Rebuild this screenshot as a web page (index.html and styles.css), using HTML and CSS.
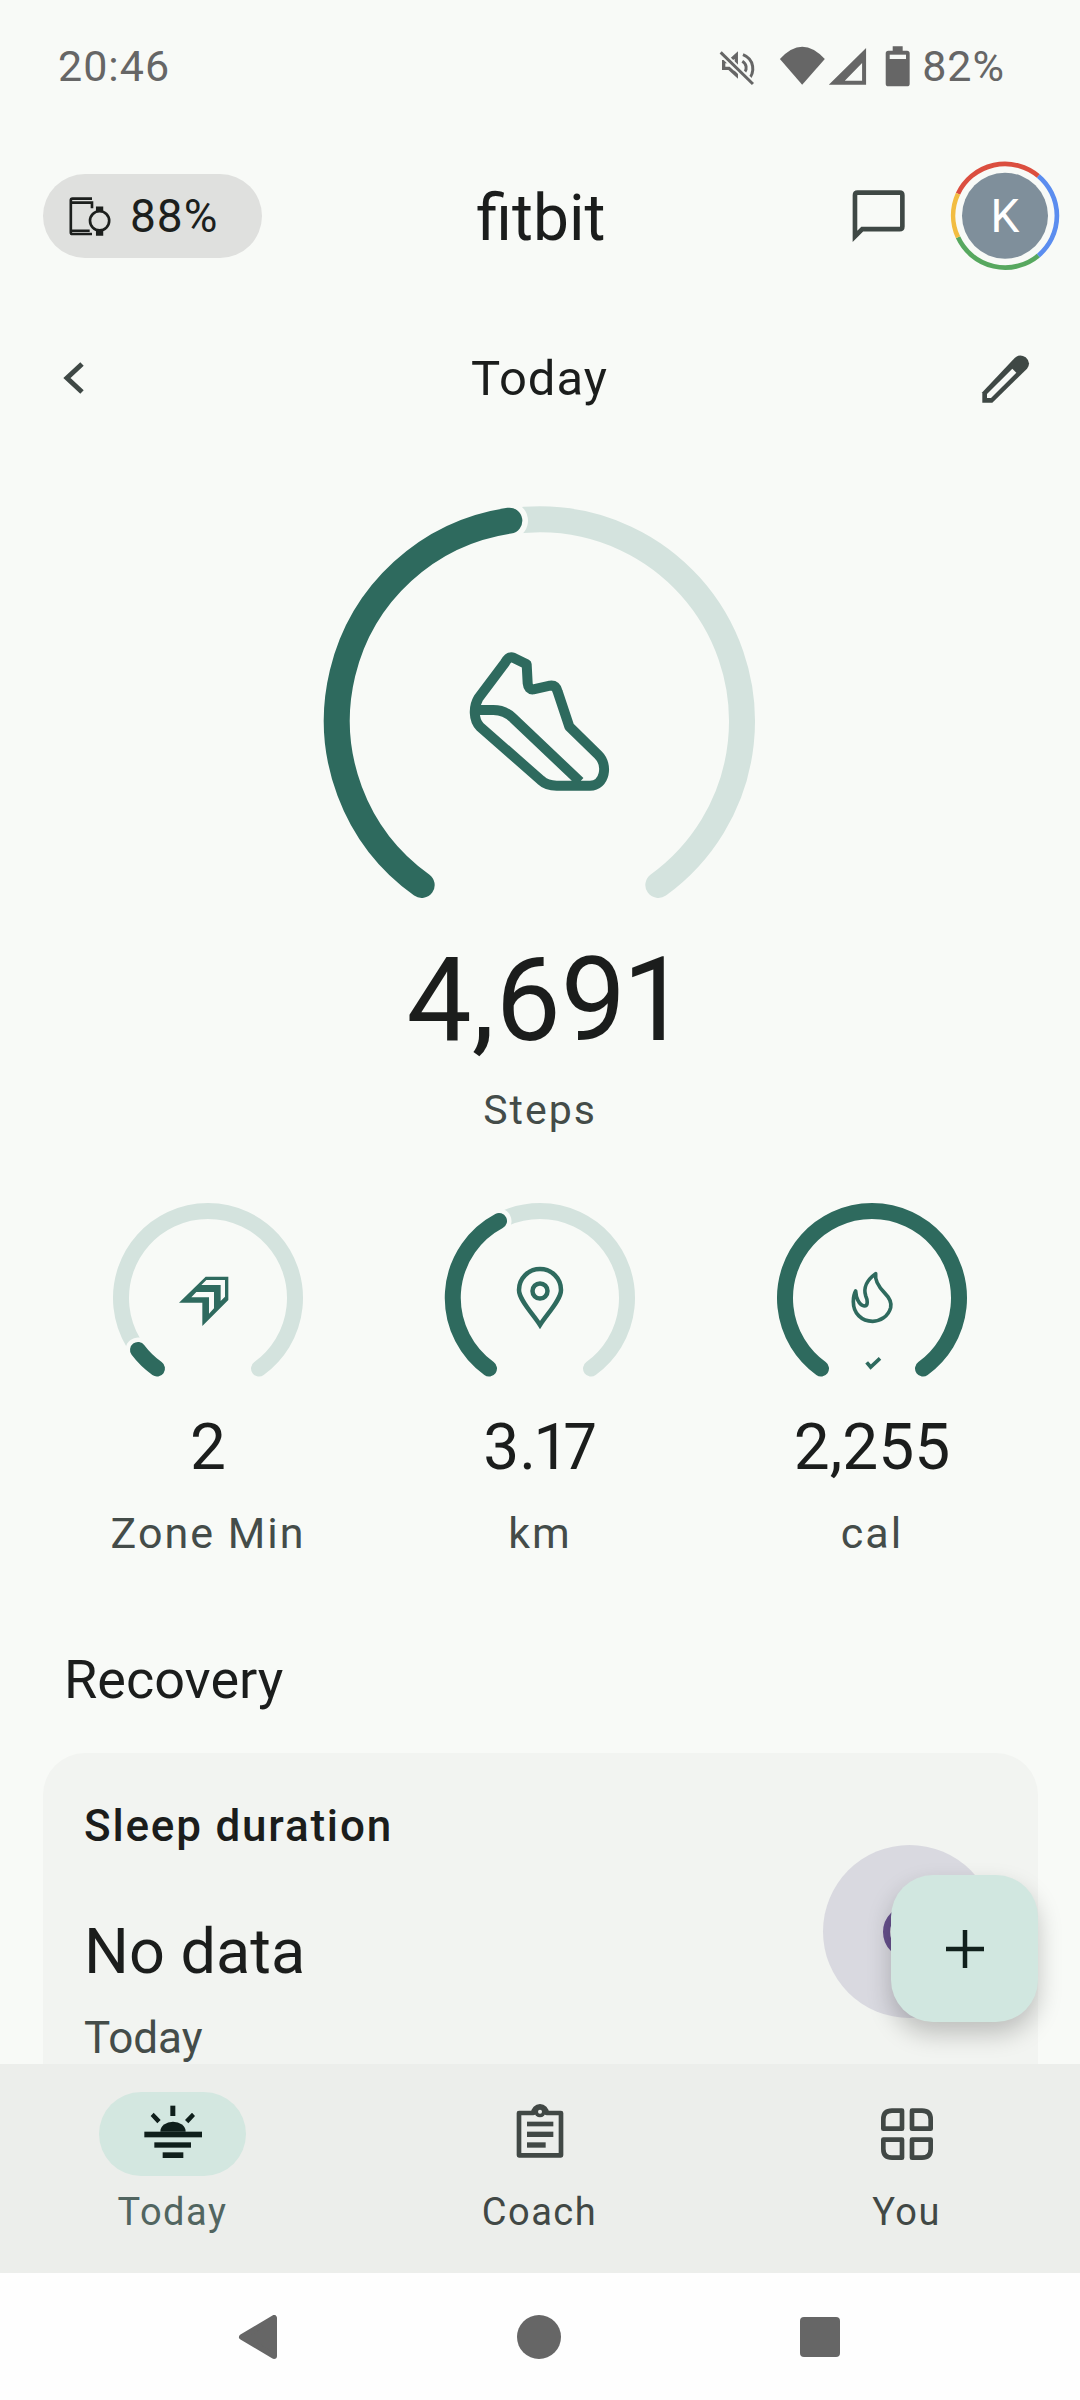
FILE: index.html
```html
<!DOCTYPE html>
<html lang="en">

<head>
    <meta charset="UTF-8">
    <meta name="viewport" content="width=device-width, initial-scale=1.0">
    <title>Fitbit Today</title>
    <link rel="stylesheet" href="styles.css">
</head>

<body>
    <div id="screen">
        <!-- status bar -->
        <header class="status-bar">
            <span>20:46</span>
            <div class="status-right">
                <svg class="status-icons" viewBox="120 40 580 135">
                    <path d="M134 93H150L172 73V133L150 113H134Z" fill="none" stroke="#666" stroke-width="10" />
                    <path d="M192 72C225 85 232 125 205 150M190 92C203 100 205 115 197 125" fill="none" stroke="#666" stroke-width="9" />
                    <path d="M125 65L222 160" stroke="#f8faf7" stroke-width="20" />
                    <path d="M125 65L222 160" stroke="#666" stroke-width="9" />
                    <path d="M303 85Q370 11 438 85L370 162Z" fill="#666" />
                    <path d="M450 162L562 52V162ZM498 150H550V97Z" fill="#666" fill-rule="evenodd" />
                    <path d="M642 60V47H672V60H685Q693 60 693 68V159Q693 167 685 167H629Q621 167 621 159V68Q621 60 629 60Z" fill="#666" />
                    <rect x="633" y="72" width="49" height="13" fill="#f8faf7" />
                </svg>
                <span>82%</span>
            </div>
        </header>

        <main class="content">
            <div class="app-bar">
                <div class="device-pill">
                    <svg class="device-icon" viewBox="140 135 135 130">
                        <path d="M212 146H153Q148 146 148 151V248Q148 253 153 253H212M148 158H212V175M148 243H205" fill="none" stroke="#1c1f1d" stroke-width="8" />
                        <circle cx="235" cy="213" r="29" fill="none" stroke="#1c1f1d" stroke-width="8" />
                        <path d="M224 184V170H246V184ZM224 242V258H246V242Z" fill="#1c1f1d" />
                    </svg>
                    <span>88%</span>
                </div>
                <div class="logo">fitbit</div>
                <div class="app-actions">
                    <svg class="chat-icon" viewBox="515 475 175 170">
                        <path d="M538 488H665Q673 488 673 496V590Q673 598 665 598H552L530 620V496Q530 488 538 488Z" fill="none" stroke="#3f4845" stroke-width="14" />
                    </svg>
                    <svg class="avatar" viewBox="810 390 336 336">
                        <g fill="none" stroke-width="14">
                            <path d="M837 491A156 156 0 0 1 1078 438" stroke="#db4e3f" />
                            <path d="M1078 438A156 156 0 0 1 1078 677" stroke="#5b8def" />
                            <path d="M1078 677A156 156 0 0 1 837 622" stroke="#57a85f" />
                            <path d="M837 622A156 156 0 0 1 837 491" stroke="#f2bd42" />
                        </g>
                        <circle cx="978" cy="557" r="129" fill="#7f8f9b" />
                        <text x="978" y="606" text-anchor="middle" class="avatar-letter">K</text>
                    </svg>
                </div>
            </div>

            <div class="date-row">
                <svg class="date-icon" viewBox="41 346 64 64">
                    <path d="M82 364L67 378L82 392" fill="none" stroke="#3f4845" stroke-width="5" />
                </svg>
                <div class="date-title">Today</div>
                <svg class="date-icon" viewBox="13 16 192 192">
                    <path d="M38 186V155L135 52Q150 38 168 50Q186 66 172 84L68 186Z" fill="#3f4845" />
                    <path d="M52 160L128 84L140 96L64 172H52Z" fill="#f8faf7" />
                </svg>
            </div>

            <!-- steps goal -->
            <svg class="steps-ring" viewBox="0 0 1440 1380">
                <path d="M365 1215A606 606 0 1 1 1075 1215" fill="none" stroke="#d4e3de" stroke-width="78" stroke-linecap="round" />
                <path d="M365 1215A606 606 0 0 1 628 122" fill="none" stroke="#f8faf7" stroke-width="112" stroke-linecap="round" />
                <path d="M365 1215A606 606 0 0 1 628 122" fill="none" stroke="#2e6a5e" stroke-width="78" stroke-linecap="round" />
                <path d="M640 533L680 553L683 610Q685 630 700 628L750 617Q768 615 773 635L808 740L895 825C925 855 915 917 870 917H770Q740 917 722 900L540 740C520 720 520 680 535 655L615 548Q627 528 640 533ZM528 690H580Q615 690 640 715L840 905" fill="none" stroke="#2e6a5e" stroke-width="30" stroke-linejoin="round" />
            </svg>
            <div class="steps-value">4,691</div>
            <div class="steps-label">Steps</div>

            <div class="stats">
                <div class="stat">
                    <svg class="stat-ring" viewBox="-100 -100 200 190">
                        <path d="M-51 70.5A87 87 0 1 1 51 70.5" class="track" />
                        <path d="M-51 70.5A87 87 0 0 1 -70 52" class="gap" />
                        <path d="M-51 70.5A87 87 0 0 1 -70 52" class="fill" />
                        <g transform="translate(-44 -43) scale(.3333)">
                            <path d="M45 143L125 65H193V135L115 213V143Z" fill="#2e6a5e" />
                            <path d="M127 75H183V125L170 138V90H112ZM82 127L97 111H150V160L135 176V127Z" fill="#f8faf7" />
                        </g>
                    </svg>
                    <div class="stat-value">2</div>
                    <div class="stat-label">Zone Min</div>
                </div>
                <div class="stat">
                    <svg class="stat-ring" viewBox="-100 -100 200 190">
                        <path d="M-51 70.5A87 87 0 1 1 51 70.5" class="track" />
                        <path d="M-51 70.5A87 87 0 0 1 -41 -77" class="gap" />
                        <path d="M-51 70.5A87 87 0 0 1 -41 -77" class="fill" />
                        <path d="M0 27C-7 16 -21 2 -21 -8A21 21 0 0 1 21 -8C21 2 7 16 0 27Z" fill="none" stroke="#2e6a5e" stroke-width="4.5" />
                        <circle cx="0" cy="-7" r="7.5" fill="none" stroke="#2e6a5e" stroke-width="4.5" />
                    </svg>
                    <div class="stat-value">3.17</div>
                    <div class="stat-label">km</div>
                </div>
                <div class="stat">
                    <svg class="stat-ring" viewBox="-100 -100 200 190">
                        <path d="M-51 70.5A87 87 0 1 1 51 70.5" class="fill" />
                        <g transform="translate(-47 -43) scale(.3333)">
                            <path d="M152 56C148 80 165 100 180 115C195 130 200 145 197 158C190 185 165 199 143 199C110 199 85 175 85 140C85 125 88 115 92 108C93 125 100 150 118 153C130 153 128 135 122 122C115 100 125 75 152 56Z" fill="none" stroke="#2e6a5e" stroke-width="11" stroke-linejoin="round" />
                            <path d="M125 322L137 336L165 310" fill="none" stroke="#2e6a5e" stroke-width="11" />
                        </g>
                    </svg>
                    <div class="stat-value">2,255</div>
                    <div class="stat-label">cal</div>
                </div>
            </div>

            <h2 class="section-title">Recovery</h2>

            <section class="card">
                <div class="card-text">
                    <div class="card-title">Sleep duration</div>
                    <div class="card-value">No data</div>
                    <div class="card-sub">Today</div>
                </div>
                <div class="sleep-badge">
                    <span class="sleep-ring"></span>
                </div>
            </section>

            <button class="fab">
                <svg viewBox="0 0 38 38" class="fab-icon">
                    <path d="M19 0V38M0 19H38" stroke="#10201c" stroke-width="4.5" />
                </svg>
            </button>
        </main>

        <!-- bottom tabs -->
        <nav class="tabs">
            <div class="tab active">
                <div class="tab-icon">
                    <svg viewBox="8 12 270 240">
                        <rect x="57" y="125" width="173" height="17" />
                        <path d="M105 125A38 30 0 0 1 181 125Z" />
                        <rect x="87" y="157" width="110" height="16" />
                        <rect x="112" y="187" width="62" height="17" />
                        <rect x="135" y="47" width="15" height="31" />
                        <path d="M85 68L106 90L96 100L76 78ZM200 68L179 90L189 100L209 78Z" />
                    </svg>
                </div>
                <span>Today</span>
            </div>
            <div class="tab">
                <div class="tab-icon">
                    <svg viewBox="-2 -3 270 240">
                        <path d="M70 54H113A20 20 0 0 1 153 54H196V181H70Z" fill="none" stroke="#414845" stroke-width="14" stroke-linejoin="round" />
                        <circle cx="133" cy="50" r="17" fill="#414845" />
                        <circle cx="133" cy="50" r="6" fill="#ecEEEB" />
                        <rect x="94" y="80" width="79" height="14" fill="#414845" />
                        <rect x="94" y="110" width="79" height="16" fill="#414845" />
                        <rect x="94" y="142" width="56" height="16" fill="#414845" />
                    </svg>
                </div>
                <span>Coach</span>
            </div>
            <div class="tab">
                <div class="tab-icon">
                    <svg viewBox="1100 -3 270 240">
                        <g fill="none" stroke="#414845" stroke-width="14" stroke-linejoin="round">
                            <path d="M1220 47H1190Q1164 47 1164 73V101H1220Z" />
                            <path d="M1250 47H1280Q1306 47 1306 73V101H1250Z" />
                            <path d="M1220 188H1190Q1164 188 1164 162V134H1220Z" />
                            <path d="M1250 188H1280Q1306 188 1306 162V134H1250Z" />
                        </g>
                    </svg>
                </div>
                <span>You</span>
            </div>
        </nav>

        <footer class="system-nav">
            <svg class="sys-back" viewBox="0 0 40 44">
                <path d="M36 3V41L4 22Z" fill="#666" stroke="#666" stroke-width="6" stroke-linejoin="round" />
            </svg>
            <span class="sys-home"></span>
            <span class="sys-recent"></span>
        </footer>
    </div>
</body>

</html>
```

FILE: styles.css
```css
* {
    margin: 0;
    padding: 0;
    box-sizing: border-box;
}

html,
body {
    background-color: #f8faf7;
    height: 100%;
}

body {
    font-family: Roboto, "Liberation Sans", sans-serif;
    color: #1b1d1c;
}

svg {
    display: block;
}

#screen {
    width: 1080px;
    height: 2400px;
    display: flex;
    flex-direction: column;
    overflow: hidden;
}

/* status bar */
.status-bar {
    height: 132px;
    flex: none;
    display: flex;
    justify-content: space-between;
    align-items: center;
    padding: 0 75px 0 58px;
    font-size: 43px;
    letter-spacing: 1px;
    color: #666;
}

.status-right {
    display: flex;
    align-items: center;
    gap: 10px;
}

.status-icons {
    width: 193px;
    height: 45px;
}

/* main scroll area */
.content {
    height: 1932px;
    flex: none;
    position: relative;
    overflow: hidden;
}

.app-bar {
    height: 168px;
    display: grid;
    grid-template-columns: 1fr auto 1fr;
    align-items: center;
    padding: 0 19px 0 21px;
}

.device-pill {
    justify-self: start;
    margin-left: 22px;
    width: 219px;
    height: 84px;
    border-radius: 42px;
    background: #dfe0de;
    display: flex;
    align-items: center;
    gap: 17px;
    padding-left: 25px;
    font-size: 46px;
    letter-spacing: 1px;
    color: #1c1f1d;
}

.device-icon {
    width: 45px;
    height: 43px;
}

.logo {
    font-size: 64px;
    line-height: 60px;
    padding-top: 6px;
}

.app-actions {
    justify-self: end;
    display: flex;
    align-items: center;
    gap: 41px;
}

.chat-icon {
    width: 58px;
    height: 57px;
}

.avatar {
    width: 112px;
    height: 112px;
}

.avatar-letter {
    font-size: 138px;
    fill: #fff;
}

.date-row {
    height: 156px;
    display: flex;
    justify-content: space-between;
    align-items: center;
    padding: 0 42px 0 41px;
}

.date-icon {
    width: 64px;
    height: 64px;
}

.date-title {
    font-size: 49px;
    letter-spacing: 1px;
}

.steps-ring {
    width: 480px;
    height: 460px;
    margin: 24px auto 0;
}

.steps-value {
    text-align: center;
    font-size: 116px;
    line-height: 120px;
    padding-left: 4px;
    font-variant-numeric: proportional-nums;
}

.steps-label {
    margin-top: 10px;
    text-align: center;
    font-size: 41px;
    line-height: 80px;
    letter-spacing: 2px;
    color: #444c49;
}

.stats {
    display: grid;
    grid-template-columns: repeat(3, 332px);
    padding-left: 42px;
    margin-top: 48px;
}

.stat {
    text-align: center;
}

.stat-ring {
    width: 200px;
    height: 190px;
    margin: 0 auto;
}

.track,
.gap,
.fill {
    fill: none;
    stroke-linecap: round;
    stroke-width: 16;
}

.track {
    stroke: #d4e3de;
}

.gap {
    stroke: #f8faf7;
    stroke-width: 25;
}

.fill {
    stroke: #2e6a5e;
}

.stat-value {
    margin-top: 24px;
    font-size: 64px;
    line-height: 72px;
    font-variant-numeric: proportional-nums;
}

.stat-label {
    margin-top: 21px;
    font-size: 43px;
    line-height: 56px;
    letter-spacing: 2px;
    color: #444c49;
}

.section-title {
    margin: 89px 0 43px 64px;
    font-size: 54px;
    font-weight: 400;
    line-height: 60px;
}

.card {
    margin: 0 42px 0 43px;
    height: 400px;
    border-radius: 42px;
    background: #f2f4f1;
    display: flex;
    justify-content: space-between;
    padding: 45px 42px 0 41px;
}

.card-title {
    font-size: 44px;
    font-weight: 500;
    line-height: 56px;
    letter-spacing: 1.8px;
}

.card-value {
    margin-top: 62px;
    font-size: 63px;
    line-height: 72px;
}

.card-sub {
    margin-top: 22px;
    font-size: 44px;
    line-height: 56px;
    color: #444c49;
}

.sleep-badge {
    width: 173px;
    height: 173px;
    margin-top: 47px;
    border-radius: 50%;
    background: #d9d9e0;
    display: flex;
    justify-content: center;
    align-items: center;
}

.sleep-ring {
    width: 54px;
    height: 54px;
    border-radius: 50%;
    border: 7px solid #66508c;
}

.fab {
    position: absolute;
    left: 891px;
    top: 1743px;
    width: 147px;
    height: 147px;
    border: 0;
    border-radius: 42px;
    background: #d1e7e0;
    box-shadow: 0 12px 24px rgba(0, 0, 0, .22);
    display: flex;
    justify-content: center;
    align-items: center;
}

.fab-icon {
    width: 38px;
    height: 38px;
}

/* bottom tabs */
.tabs {
    height: 209px;
    flex: none;
    background: #eceeeb;
    display: flex;
    justify-content: space-between;
    padding: 28px 100px 0 99px;
}

.tab {
    width: 147px;
    text-align: center;
    font-size: 38px;
    letter-spacing: 1.5px;
    color: #414845;
}

.tab.active {
    color: #516560;
}

.tab-icon {
    width: 147px;
    height: 84px;
    border-radius: 42px;
    display: flex;
    justify-content: center;
    align-items: center;
    margin-bottom: 14px;
}

.tab-icon svg {
    width: 90px;
    height: 80px;
}

.tab.active .tab-icon {
    background: #d3e7e0;
}

.tab.active svg {
    fill: #0f1f1b;
}

.system-nav {
    flex: 1;
    background: #fefefe;
    display: flex;
    justify-content: space-between;
    align-items: center;
    padding: 0 240px 0 238px;
}

.sys-back {
    width: 40px;
    height: 44px;
}

.sys-home {
    width: 44px;
    height: 44px;
    border-radius: 50%;
    background: #666;
}

.sys-recent {
    width: 40px;
    height: 40px;
    border-radius: 4px;
    background: #666;
}
```
